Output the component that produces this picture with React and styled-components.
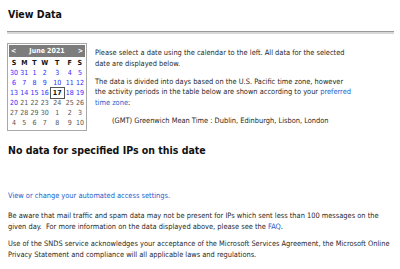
import React from "react";
import styled, { createGlobalStyle } from "styled-components";

const Global = createGlobalStyle`
  html, body { margin: 0; padding: 0; background: #ffffff; }
  body { font-family: "DejaVu Sans Condensed", "DejaVu Sans", Tahoma, sans-serif; color: #1f1f1f; }
`;

const Page = styled.div`
  width: 400px;
  height: 269px;
  box-sizing: border-box;
  padding: 8px 6px 0 7px;
  overflow: hidden;
`;

const Title = styled.h1`
  margin: 0 0 0 1px;
  font-size: 10.5px;
  line-height: 13px;
  font-weight: bold;
  color: #111;
`;

const Rule = styled.div`
  margin-top: 10px;
  height: 2px;
  border-top: 1px solid #9a9a9a;
  background: #d8d8d8;
`;

const Top = styled.div`
  display: flex;
  align-items: flex-start;
  gap: 8px;
  margin-top: 9px;
`;

const Calendar = styled.div`
  width: 80px;
  box-sizing: border-box;
  border: 1px solid #a8a8a8;
  padding: 1px 1px 2px 1px;
  flex: none;
`;

const CalHeader = styled.div`
  height: 12px;
  background: #7c7c7c;
  color: #fff;
  display: flex;
  align-items: center;
  justify-content: space-between;
  padding: 0 2px;
  font-size: 7px;
  font-weight: bold;
`;

const Grid = styled.div`
  display: grid;
  grid-template-columns: repeat(7, 1fr);
  grid-auto-rows: 10px;
  margin-top: 1px;
`;

const Cell = styled.div`
  display: flex;
  align-items: center;
  justify-content: center;
  font-size: 7px;
  font-weight: ${(p) => (p.$head || p.$sel ? "bold" : "normal")};
  color: ${(p) => (p.$head || p.$sel ? "#111" : p.$active ? "#2b2bff" : "#555")};
`;

const SelBox = styled.span`
  border: 1px solid #555;
  padding: 0 2px;
  line-height: 10px;
`;

const Info = styled.div`
  flex: 1;
  font-size: 7.4px;
  line-height: 10.5px;
  padding-top: 5px;
  max-width: 259px;
`;

const P = styled.p`
  margin: 0 0 7.5px 0;
  padding-left: ${(p) => (p.$indent ? "17px" : "0")};
`;

const A = styled.span`
  color: #2060cc;
`;

const Heading = styled.h2`
  margin: 10px 0 0 1px;
  font-size: 10.5px;
  line-height: 13px;
  font-weight: bold;
  color: #111;
`;

const Body = styled.div`
  font-size: 7.4px;
  line-height: 10.5px;
  margin-top: 34px;
  padding-left: 1px;
`;

const BP = styled.p`
  margin: 0 0 ${(p) => p.$mb || 7}px 0;
`;

const days = [
  [30, 31, 1, 2, 3, 4, 5],
  [6, 7, 8, 9, 10, 11, 12],
  [13, 14, 15, 16, 17, 18, 19],
  [20, 21, 22, 23, 24, 25, 26],
  [27, 28, 29, 30, 1, 2, 3],
  [4, 5, 6, 7, 8, 9, 10],
];

export default function App() {
  const names = ["S", "M", "T", "W", "T", "F", "S"];
  return (
    <Page>
      <Global />
      <Title>View Data</Title>
      <Rule />
      <Top>
        <Calendar>
          <CalHeader>
            <span>&lt;</span>
            <span>June 2021</span>
            <span>&gt;</span>
          </CalHeader>
          <Grid>
            {names.map((n, i) => (
              <Cell key={"h" + i} $head>
                {n}
              </Cell>
            ))}
            {days.map((row, r) =>
              row.map((d, c) => {
                const idx = r * 7 + c;
                const active = idx <= 21;
                const sel = idx === 18;
                return (
                  <Cell key={idx} $active={active} $sel={sel}>
                    {sel ? <SelBox>{d}</SelBox> : d}
                  </Cell>
                );
              })
            )}
          </Grid>
        </Calendar>
        <Info>
          <P>
            Please select a date using the calendar to the left. All data for the selected date are displayed below.
          </P>
          <P>
            The data is divided into days based on the U.S. Pacific time zone, however the activity periods in the table below are shown according to your <A>preferred time zone</A>:
          </P>
          <P $indent>(GMT) Greenwich Mean Time : Dublin, Edinburgh, Lisbon, London</P>
        </Info>
      </Top>
      <Heading>No data for specified IPs on this date</Heading>
      <Body>
        <BP $mb={10}>
          <A>View or change your automated access settings.</A>
        </BP>
        <BP>
          Be aware that mail traffic and spam data may not be present for IPs which sent less than 100 messages on the given day.&nbsp; For more information on the data displayed above, please see the <A>FAQ</A>.
        </BP>
        <BP>
          Use of the SNDS service acknowledges your acceptance of the Microsoft Services Agreement, the Microsoft Online Privacy Statement and compliance will all applicable laws and regulations.
        </BP>
      </Body>
    </Page>
  );
}
